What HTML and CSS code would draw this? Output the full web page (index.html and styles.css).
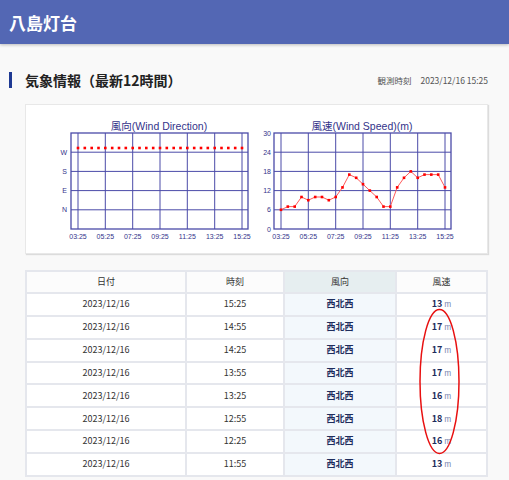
FILE: index.html
```html
<!DOCTYPE html>
<html lang="ja">
  <head>
    <meta charset="utf-8">
    <meta name="viewport" content="width=device-width, initial-scale=1">
    <title>八島灯台</title>
    <link rel="stylesheet" href="styles.css">
  </head>
  <body>
    <header class='top'>
        <h1>八島灯台</h1>
    </header>
    <div class='main'>
        <div class='heading'>
            <h2>気象情報（最新12時間）</h2>
            <div class='observed'><span>観測時刻</span>2023/12/16 15:25</div>
        </div>
        <div class='charts'>
            <svg class='chart' width='200' height='130' viewBox='0 0 200 130'>
                <text class='chart-title' x='103' y='17'>風向(Wind Direction)</text>
                <g class='grid'>
                    <line x1='22' y1='20' x2='22' y2='116'/>
                    <line x1='49.3' y1='20' x2='49.3' y2='116'/>
                    <line x1='76.7' y1='20' x2='76.7' y2='116'/>
                    <line x1='104' y1='20' x2='104' y2='116'/>
                    <line x1='131.3' y1='20' x2='131.3' y2='116'/>
                    <line x1='158.7' y1='20' x2='158.7' y2='116'/>
                    <line x1='186' y1='20' x2='186' y2='116'/>
                    <line x1='15' y1='39.2' x2='192' y2='39.2'/>
                    <line x1='15' y1='58.4' x2='192' y2='58.4'/>
                    <line x1='15' y1='77.6' x2='192' y2='77.6'/>
                    <line x1='15' y1='96.8' x2='192' y2='96.8'/>
                    <rect class='frame' x='15' y='20' width='177' height='96'/>
                </g>
                <g class='y-labels'>
                    <text x='11' y='41.5'>W</text>
                    <text x='11' y='60.7'>S</text>
                    <text x='11' y='79.9'>E</text>
                    <text x='11' y='99.1'>N</text>
                </g>
                <g class='x-labels'>
                    <text x='22' y='125.5'>03:25</text>
                    <text x='49.3' y='125.5'>05:25</text>
                    <text x='76.7' y='125.5'>07:25</text>
                    <text x='104' y='125.5'>09:25</text>
                    <text x='131.3' y='125.5'>11:25</text>
                    <text x='158.7' y='125.5'>13:25</text>
                    <text x='186' y='125.5'>15:25</text>
                </g>
                <g class='dots'>
                    <rect x='20.7' y='33.7' width='2.6' height='2.6'/>
                    <rect x='27.5' y='33.7' width='2.6' height='2.6'/>
                    <rect x='34.4' y='33.7' width='2.6' height='2.6'/>
                    <rect x='41.2' y='33.7' width='2.6' height='2.6'/>
                    <rect x='48' y='33.7' width='2.6' height='2.6'/>
                    <rect x='54.9' y='33.7' width='2.6' height='2.6'/>
                    <rect x='61.7' y='33.7' width='2.6' height='2.6'/>
                    <rect x='68.5' y='33.7' width='2.6' height='2.6'/>
                    <rect x='75.4' y='33.7' width='2.6' height='2.6'/>
                    <rect x='82.2' y='33.7' width='2.6' height='2.6'/>
                    <rect x='89' y='33.7' width='2.6' height='2.6'/>
                    <rect x='95.9' y='33.7' width='2.6' height='2.6'/>
                    <rect x='102.7' y='33.7' width='2.6' height='2.6'/>
                    <rect x='109.5' y='33.7' width='2.6' height='2.6'/>
                    <rect x='116.4' y='33.7' width='2.6' height='2.6'/>
                    <rect x='123.2' y='33.7' width='2.6' height='2.6'/>
                    <rect x='130' y='33.7' width='2.6' height='2.6'/>
                    <rect x='136.9' y='33.7' width='2.6' height='2.6'/>
                    <rect x='143.7' y='33.7' width='2.6' height='2.6'/>
                    <rect x='150.5' y='33.7' width='2.6' height='2.6'/>
                    <rect x='157.4' y='33.7' width='2.6' height='2.6'/>
                    <rect x='164.2' y='33.7' width='2.6' height='2.6'/>
                    <rect x='171' y='33.7' width='2.6' height='2.6'/>
                    <rect x='177.9' y='33.7' width='2.6' height='2.6'/>
                    <rect x='184.7' y='33.7' width='2.6' height='2.6'/>
                </g>
            </svg>
            <svg class='chart' width='200' height='130' viewBox='0 0 200 130'>
                <text class='chart-title' x='103' y='17'>風速(Wind Speed)(m)</text>
                <g class='grid'>
                    <line x1='22' y1='20' x2='22' y2='116'/>
                    <line x1='49.3' y1='20' x2='49.3' y2='116'/>
                    <line x1='76.7' y1='20' x2='76.7' y2='116'/>
                    <line x1='104' y1='20' x2='104' y2='116'/>
                    <line x1='131.3' y1='20' x2='131.3' y2='116'/>
                    <line x1='158.7' y1='20' x2='158.7' y2='116'/>
                    <line x1='186' y1='20' x2='186' y2='116'/>
                    <line x1='15' y1='39.2' x2='192' y2='39.2'/>
                    <line x1='15' y1='58.4' x2='192' y2='58.4'/>
                    <line x1='15' y1='77.6' x2='192' y2='77.6'/>
                    <line x1='15' y1='96.8' x2='192' y2='96.8'/>
                    <rect class='frame' x='15' y='20' width='177' height='96'/>
                </g>
                <g class='y-labels'>
                    <text x='12' y='22.5'>30</text>
                    <text x='12' y='41.7'>24</text>
                    <text x='12' y='60.9'>18</text>
                    <text x='12' y='80.1'>12</text>
                    <text x='12' y='99.3'>6</text>
                    <text x='12' y='118.5'>0</text>
                </g>
                <g class='x-labels'>
                    <text x='22' y='125.5'>03:25</text>
                    <text x='49.3' y='125.5'>05:25</text>
                    <text x='76.7' y='125.5'>07:25</text>
                    <text x='104' y='125.5'>09:25</text>
                    <text x='131.3' y='125.5'>11:25</text>
                    <text x='158.7' y='125.5'>13:25</text>
                    <text x='186' y='125.5'>15:25</text>
                </g>
                <polyline class='speed-line' points='22,96.8 28.8,93.6 35.7,93.6 42.5,84 49.3,87.2 56.2,84 63,84 69.8,87.2 76.7,84 83.5,74.4 90.3,61.6 97.2,64.8 104,71.2 110.8,77.6 117.7,84 124.5,93.6 131.3,93.6 138.2,74.4 145,64.8 151.8,58.4 158.7,64.8 165.5,61.6 172.3,61.6 179.2,61.6 186,74.4'/>
                <g class='dots'>
                    <rect x='20.7' y='95.5' width='2.6' height='2.6'/>
                    <rect x='27.5' y='92.3' width='2.6' height='2.6'/>
                    <rect x='34.4' y='92.3' width='2.6' height='2.6'/>
                    <rect x='41.2' y='82.7' width='2.6' height='2.6'/>
                    <rect x='48' y='85.9' width='2.6' height='2.6'/>
                    <rect x='54.9' y='82.7' width='2.6' height='2.6'/>
                    <rect x='61.7' y='82.7' width='2.6' height='2.6'/>
                    <rect x='68.5' y='85.9' width='2.6' height='2.6'/>
                    <rect x='75.4' y='82.7' width='2.6' height='2.6'/>
                    <rect x='82.2' y='73.1' width='2.6' height='2.6'/>
                    <rect x='89' y='60.3' width='2.6' height='2.6'/>
                    <rect x='95.9' y='63.5' width='2.6' height='2.6'/>
                    <rect x='102.7' y='69.9' width='2.6' height='2.6'/>
                    <rect x='109.5' y='76.3' width='2.6' height='2.6'/>
                    <rect x='116.4' y='82.7' width='2.6' height='2.6'/>
                    <rect x='123.2' y='92.3' width='2.6' height='2.6'/>
                    <rect x='130' y='92.3' width='2.6' height='2.6'/>
                    <rect x='136.9' y='73.1' width='2.6' height='2.6'/>
                    <rect x='143.7' y='63.5' width='2.6' height='2.6'/>
                    <rect x='150.5' y='57.1' width='2.6' height='2.6'/>
                    <rect x='157.4' y='63.5' width='2.6' height='2.6'/>
                    <rect x='164.2' y='60.3' width='2.6' height='2.6'/>
                    <rect x='171' y='60.3' width='2.6' height='2.6'/>
                    <rect x='177.9' y='60.3' width='2.6' height='2.6'/>
                    <rect x='184.7' y='73.1' width='2.6' height='2.6'/>
                </g>
            </svg>
        </div>
        <div class='table-wrap'>
            <table class='weather'>
                <thead>
                    <tr><th class='c-date'>日付</th><th class='c-time'>時刻</th><th class='c-dir'>風向</th><th class='c-speed'>風速</th></tr>
                </thead>
                <tbody>
                    <tr><td>2023/12/16</td><td>15:25</td><td class='c-dir'>西北西</td><td><b>13</b> <small>m</small></td></tr>
                    <tr><td>2023/12/16</td><td>14:55</td><td class='c-dir'>西北西</td><td><b>17</b> <small>m</small></td></tr>
                    <tr><td>2023/12/16</td><td>14:25</td><td class='c-dir'>西北西</td><td><b>17</b> <small>m</small></td></tr>
                    <tr><td>2023/12/16</td><td>13:55</td><td class='c-dir'>西北西</td><td><b>17</b> <small>m</small></td></tr>
                    <tr><td>2023/12/16</td><td>13:25</td><td class='c-dir'>西北西</td><td><b>16</b> <small>m</small></td></tr>
                    <tr><td>2023/12/16</td><td>12:55</td><td class='c-dir'>西北西</td><td><b>18</b> <small>m</small></td></tr>
                    <tr><td>2023/12/16</td><td>12:25</td><td class='c-dir'>西北西</td><td><b>16</b> <small>m</small></td></tr>
                    <tr><td>2023/12/16</td><td>11:55</td><td class='c-dir'>西北西</td><td><b>13</b> <small>m</small></td></tr>
                </tbody>
            </table>
            <svg class='mark' width='50' height='150' viewBox='0 0 50 150'>
                <ellipse cx='24.5' cy='74.5' rx='19.5' ry='72'/>
            </svg>
        </div>
    </div>
  </body>
</html>
```

FILE: styles.css
```css
body {
    margin: 0;
    background-color: #f9f9f9;
    font-family: "Noto Sans CJK JP", "Noto Sans", sans-serif;
    color: #333;
    overflow: hidden;
}
.top {
    height: 44px;
    background-color: #5367b4;
    box-shadow: 0 1px 3px rgba(0,0,0,0.25);
    display: flex;
    align-items: center;
    padding-left: 9px;
}
.top h1 {
    margin: 0;
    font-size: 17px;
    font-weight: bold;
    color: #fff;
}
.main {
    padding: 0 21px 0 25px;
}
.heading {
    margin: 28px 0 0 -16px;
    display: flex;
    justify-content: space-between;
    align-items: center;
}
.heading h2 {
    margin: 0;
    font-size: 14px;
    line-height: 16px;
    font-weight: bold;
    color: #222;
    border-left: 3px solid #1f3a93;
    padding-left: 13px;
}
.observed {
    font-size: 8.5px;
    color: #555;
}
.observed span {
    margin-right: 9px;
}
.charts {
    margin-top: 16px;
    height: 130px;
    padding: 8px 0 10px 30px;
    background-color: #fff;
    border: 1px solid #e8e8e8;
    box-shadow: 1px 1px 1px #dcdcdc;
    display: flex;
    gap: 3px;
}
.chart {
    display: block;
}
.chart-title {
    font-family: "Liberation Sans", "Noto Sans CJK JP", sans-serif;
    font-size: 10.5px;
    fill: #33338a;
    text-anchor: middle;
}
.grid line {
    stroke: #4a4aa8;
    stroke-width: 1;
}
.grid .frame {
    fill: none;
    stroke: #4a4aa8;
    stroke-width: 1.3;
}
.y-labels text {
    font-family: "Liberation Sans", sans-serif;
    font-size: 7px;
    fill: #33338a;
    text-anchor: end;
}
.x-labels text {
    font-family: "Liberation Sans", sans-serif;
    font-size: 7px;
    fill: #33338a;
    text-anchor: middle;
}
.dots rect {
    fill: #f00;
}
.speed-line {
    fill: none;
    stroke: #ff5a5a;
    stroke-width: 1;
}
.table-wrap {
    position: relative;
    margin-top: 16px;
}
.weather {
    width: 100%;
    border-collapse: collapse;
    background-color: #fff;
    font-size: 9px;
    table-layout: fixed;
}
.weather th,
.weather td {
    border: 2px solid #e5e7ed;
    height: 20.85px;
    padding: 0;
    line-height: 12px;
    text-align: center;
    vertical-align: middle;
}
.weather th {
    height: 20px;
    font-weight: normal;
    color: #333;
    background-color: #fcfcfc;
}
.c-date {
    width: 158px;
}
.c-time {
    width: 96px;
}
.c-dir {
    width: 110px;
}
.weather th.c-dir {
    background-color: #e6eef0;
}
.weather td.c-dir {
    background-color: #f3f8fc;
    font-weight: bold;
    color: #1e2d5c;
}
.weather b {
    color: #1e2d5c;
}
.weather small {
    font-size: 7.5px;
    color: #7482ad;
}
.mark {
    position: absolute;
    left: 390px;
    top: 37px;
}
.mark ellipse {
    fill: none;
    stroke: #e81010;
    stroke-width: 1.5;
}
```
